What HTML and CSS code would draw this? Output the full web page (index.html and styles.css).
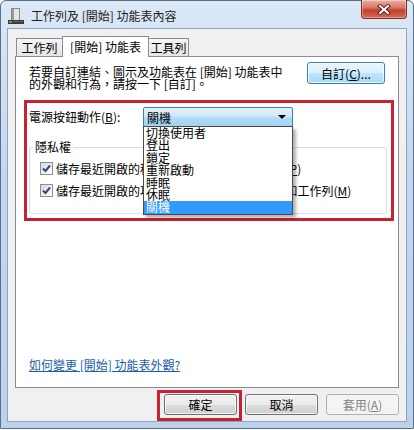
FILE: index.html
```html
<!DOCTYPE html>
<html lang="zh-Hant">
<head>
    <meta charset="UTF-8">
    <meta name="viewport" content="width=device-width, initial-scale=1.0">
    <title>工作列及 [開始] 功能表內容</title>
    <link rel="stylesheet" href="styles.css">
</head>
<body>
    <div class="window">
        <div class="titlebar">
            <svg class="app-icon" width="16" height="17" viewBox="0 0 16 17">
                <rect x="3.5" y="0.5" width="8" height="12" fill="#e4e4e4" stroke="#8a8a8a"/>
                <rect x="4" y="1" width="2" height="11" fill="#9a9a9a"/>
                <rect x="0" y="12" width="16" height="4" fill="#3a3a3a"/>
                <rect x="1" y="13" width="3" height="2" fill="#3fb04a"/>
                <rect x="5" y="13" width="10" height="1" fill="#6a6a6a"/>
            </svg>
            <span class="title">工作列及 [開始] 功能表內容</span>
            <button class="close-btn">
                <svg width="14" height="11" viewBox="0 0 14 11">
                    <path d="M3 2 L11 9 M11 2 L3 9" stroke="#5a2018" stroke-width="4" stroke-linecap="square"/>
                    <path d="M3 2 L11 9 M11 2 L3 9" stroke="#fff" stroke-width="2" stroke-linecap="square"/>
                </svg>
            </button>
        </div>
        <div class="client">
            <div class="tabs">
                <div class="tab tab-first">工作列</div>
                <div class="tab active">[開始] 功能表</div>
                <div class="tab tab-last">工具列</div>
            </div>
            <div class="panel">
                <div class="intro">
                    <p class="intro-text">若要自訂連結、圖示及功能表在 [開始] 功能表中<br>的外觀和行為，請按一下 [自訂]。</p>
                    <button class="btn btn-hot btn-custom">自訂(<u>C</u>)...</button>
                </div>
                <div class="highlight">
                    <div class="power-row">
                        <span class="power-label">電源按鈕動作(<u>B</u>):</span>
                        <div class="combo">
                            <div class="combo-box"><span>關機</span><span class="arrow"></span></div>
                            <ul class="combo-list">
                                <li>切換使用者</li>
                                <li>登出</li>
                                <li>鎖定</li>
                                <li>重新啟動</li>
                                <li>睡眠</li>
                                <li>休眠</li>
                                <li class="sel">關機</li>
                            </ul>
                        </div>
                    </div>
                    <fieldset class="group">
                        <legend>隱私權</legend>
                        <label class="check">
                            <span class="box"><svg width="11" height="11" viewBox="0 0 11 11"><path d="M2 5.5 L4.5 8 L9 2.5" fill="none" stroke="#2c4a7c" stroke-width="2"/></svg></span>
                            <span>儲存最近開啟的程式並顯示在 [開始] 功能表(<u>P</u>)</span>
                        </label>
                        <label class="check">
                            <span class="box"><svg width="11" height="11" viewBox="0 0 11 11"><path d="M2 5.5 L4.5 8 L9 2.5" fill="none" stroke="#2c4a7c" stroke-width="2"/></svg></span>
                            <span>儲存最近開啟的項目並顯示在 [開始] 功能表和工作列(<u>M</u>)</span>
                        </label>
                    </fieldset>
                </div>
                <a class="help-link" href="#">如何變更 [開始] 功能表外觀?</a>
            </div>
            <div class="actions">
                <button class="btn btn-default">確定</button>
                <button class="btn">取消</button>
                <button class="btn" disabled>套用(<u>A</u>)</button>
            </div>
        </div>
    </div>
</body>
</html>
```

FILE: styles.css
```css
body {
    margin: 0;
    background-color: #fff;
    font-family: "Noto Sans CJK TC", "Noto Sans", sans-serif;
    font-size: 12px;
    color: #000;
}

.window {
    box-sizing: border-box;
    width: 414px;
    height: 429px;
    padding: 0 6px 6px;
    border: 1px solid #5b6f8a;
    border-radius: 6px 6px 0 0;
    background: linear-gradient(#dbe8f6, #c3d7ee 40%, #bcd2eb);
}

.titlebar {
    display: flex;
    align-items: flex-start;
    height: 27px;
}

.app-icon {
    margin: 7px 0 0 1px;
}

.title {
    margin: 7px 0 0 7px;
    line-height: 15px;
    color: #1e1e1e;
}

.close-btn {
    box-sizing: border-box;
    width: 46px;
    height: 19px;
    margin: -1px 0 0 auto;
    padding: 0;
    border: 1px solid #7a2f24;
    border-top: none;
    border-radius: 0 0 4px 4px;
    background: linear-gradient(#eab3a6, #d9705f 45%, #c2402c 55%, #d56b55);
    box-shadow: inset 0 0 0 1px rgba(255, 255, 255, 0.35);
    display: flex;
    align-items: center;
    justify-content: center;
}

.client {
    box-sizing: border-box;
    height: 394px;
    padding: 0 7px;
    border: 1px solid #8ea3bf;
    background-color: #f0f0f0;
    display: flex;
    flex-direction: column;
}

.tabs {
    display: flex;
    align-items: flex-end;
    height: 21px;
    margin: 7px 0 -1px;
    padding-left: 1px;
    position: relative;
    z-index: 1;
}

.tab {
    box-sizing: border-box;
    height: 18px;
    margin-bottom: 1px;
    border: 1px solid #898c95;
    border-bottom: none;
    background: linear-gradient(#f5f5f5, #e5e5e5);
    line-height: 17px;
    text-align: center;
}

.tab-first {
    width: 47px;
}

.tab-last {
    width: 41px;
    margin-left: -1px;
}

.tab.active {
    width: 87px;
    height: 21px;
    margin: 0 0 0 -1px;
    background: #fff;
    line-height: 20px;
}

.panel {
    box-sizing: border-box;
    height: 332px;
    padding: 5px 4px 0 8px;
    border: 1px solid #898c95;
    background-color: #fff;
    display: flex;
    flex-direction: column;
}

.intro {
    display: flex;
    justify-content: space-between;
    align-items: flex-start;
    padding: 0 9px 0 5px;
}

.intro-text {
    margin: 4px 0 0;
    line-height: 12px;
}

.btn {
    box-sizing: border-box;
    width: 73px;
    height: 21px;
    padding: 0;
    border: 1px solid #707070;
    border-radius: 3px;
    background: linear-gradient(#f2f2f2, #ebebeb 50%, #dddddd 51%, #cfcfcf);
    box-shadow: inset 0 0 0 1px rgba(255, 255, 255, 0.7);
    font-family: inherit;
    font-size: 12px;
    color: #000;
}

.btn-custom {
    width: 78px;
    height: 22px;
}

.btn-hot {
    border-color: #3c7fb1;
    background: linear-gradient(#eaf6fd, #d9f0fc 50%, #bee6fd 51%, #a7d9f5);
}

.btn-default {
    position: relative;
}

/* red annotation frame round the OK button */
.btn-default::after {
    content: "";
    position: absolute;
    top: -5px;
    right: -6px;
    bottom: -7px;
    left: -8px;
    border: 3px solid #c9212f;
}

.btn:disabled {
    border-color: #adb2b5;
    background: #f4f4f4;
    box-shadow: none;
    color: #838383;
}

.highlight {
    margin-top: 10px;
    padding: 4px 4px 4px 2px;
    border: 3px solid #c9212f;
}

.power-row {
    display: flex;
    align-items: center;
    height: 20px;
}

.power-label {
    width: 114px;
    line-height: 20px;
}

.combo {
    position: relative;
    width: 150px;
}

.combo-box {
    box-sizing: border-box;
    height: 20px;
    padding: 0 6px 0 3px;
    border: 1px solid #3c7fb1;
    border-radius: 2px;
    background: linear-gradient(#e3f2fc, #cfe9fa 45%, #b3dcf6 55%, #a0d3f2);
    display: flex;
    align-items: center;
    justify-content: space-between;
}

.arrow {
    border-left: 4px solid transparent;
    border-right: 4px solid transparent;
    border-top: 4px solid #000;
}

.combo-list {
    position: absolute;
    top: 19px;
    left: 0;
    z-index: 2;
    box-sizing: border-box;
    width: 150px;
    margin: 0;
    padding: 0;
    list-style: none;
    border: 1px solid #4a4a4a;
    background-color: #fff;
    box-shadow: 3px 3px 3px rgba(0, 0, 0, 0.3);
}

.combo-list li {
    height: 12.4px;
    line-height: 12px;
    padding-left: 2px;
}

.combo-list li.sel {
    background-color: #3399ff;
    color: #fff;
}

.group {
    margin: 14px 0 0;
    padding: 4px 0 12px 10px;
    border: 1px solid #d5dfe5;
    border-radius: 3px;
    min-width: 0;
}

.group legend {
    margin-left: -7px;
    padding: 0 2px;
    line-height: 12px;
}

.check {
    display: flex;
    align-items: center;
    gap: 3px;
    height: 22px;
    white-space: nowrap;
}

.box {
    box-sizing: border-box;
    width: 13px;
    height: 13px;
    border: 1px solid #8e8f8f;
    background: linear-gradient(135deg, #d8d8d8, #ffffff);
    display: flex;
    align-items: center;
    justify-content: center;
}

.help-link {
    align-self: flex-start;
    margin: auto 0 16px;
    padding-left: 5px;
    line-height: 12px;
    color: #1a5fa8;
}

.actions {
    display: flex;
    justify-content: flex-end;
    gap: 8px;
    margin-top: 6px;
}
```
